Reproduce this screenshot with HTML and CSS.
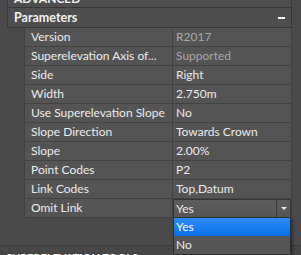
FILE: index.html
```html
<!DOCTYPE html>
<html lang="en">
<head>
    <meta charset="UTF-8">
    <title>Parameters</title>
    <link rel="stylesheet" href="styles.css">
</head>
<body>
    <div class="panel">
        <div class="section-head advanced">
            <span class="title">ADVANCED</span>
            <span class="toggle"></span>
        </div>
        <div class="section-head">
            <span class="title">Parameters</span>
            <span class="toggle"></span>
        </div>
        <div class="grid">
            <div class="row"><div class="name">Version</div><div class="value muted">R2017</div></div>
            <div class="row"><div class="name">Superelevation Axis of...</div><div class="value muted">Supported</div></div>
            <div class="row"><div class="name">Side</div><div class="value">Right</div></div>
            <div class="row"><div class="name">Width</div><div class="value">2.750m</div></div>
            <div class="row"><div class="name">Use Superelevation Slope</div><div class="value">No</div></div>
            <div class="row"><div class="name">Slope Direction</div><div class="value">Towards Crown</div></div>
            <div class="row"><div class="name">Slope</div><div class="value">2.00%</div></div>
            <div class="row"><div class="name">Point Codes</div><div class="value">P2</div></div>
            <div class="row"><div class="name">Link Codes</div><div class="value">Top,Datum</div></div>
            <div class="row">
                <div class="name">Omit Link</div>
                <div class="value combo-cell">
                    <div class="combo">
                        <span class="combo-text">Yes</span>
                        <span class="combo-btn"><span class="arrow"></span></span>
                    </div>
                    <ul class="dropdown">
                        <li class="selected">Yes</li>
                        <li>No</li>
                    </ul>
                </div>
            </div>
        </div>
        <div class="next-head">SUPERELEVATION TOOLS</div>
    </div>
</body>
</html>
```

FILE: styles.css
```css
/* Dark property panel */
body {
    margin: 0;
    background: #4a4a4a;
    font-family: Lato, "Liberation Sans", sans-serif;
    font-size: 12px;
    color: #ececec;
    overflow: hidden;
}

.panel {
    width: 301px;
    height: 267px;
    margin-top: -12px;
    background: #4a4a4a;
    position: relative;
}

.section-head {
    display: flex;
    justify-content: space-between;
    align-items: center;
    margin: 0 9px 0 7px;
    height: 19px;
    padding: 0 6px;
    background: #4e4e4e;
    border: 1px solid #383838;
    border-top: 0;
    font-weight: bold;
    font-size: 12.5px;
    color: #f2f2f2;
}

.section-head.advanced {
    align-items: flex-end;
}

.section-head.advanced .title {
    line-height: 16px;
    font-size: 12px;
}

.section-head.advanced .toggle {
    align-self: flex-end;
    margin-bottom: 8px;
}

.toggle {
    width: 7px;
    height: 2px;
    background: #f4f4f4;
}

.grid {
    margin: 0 9px 0 24px;
    background: #545454;
    border-left: 1px solid #404040;
    border-right: 1px solid #404040;
}

.row {
    display: flex;
    height: 18px;
    border-bottom: 1px solid #424242;
}

.name {
    width: 141px;
    padding-left: 6px;
    border-right: 1px solid #424242;
    line-height: 18px;
    white-space: nowrap;
    overflow: hidden;
}

.value {
    flex: 1;
    padding-left: 3px;
    line-height: 18px;
    white-space: nowrap;
}

.muted {
    color: #a8a8a8;
}

.combo-cell {
    position: relative;
    padding: 0;
}

.combo {
    display: flex;
    height: 17px;
    background: linear-gradient(#5c5c5c, #555555);
    border: 1px solid #363636;
}

.combo-text {
    flex: 1;
    padding-left: 2px;
    line-height: 17px;
}

.combo-btn {
    width: 13px;
    border-left: 1px solid #3a3a3a;
    display: flex;
    align-items: center;
    justify-content: center;
}

.arrow {
    width: 0;
    height: 0;
    border-left: 3px solid transparent;
    border-right: 3px solid transparent;
    border-top: 3px solid #e8e8e8;
}

.dropdown {
    position: absolute;
    top: 18px;
    left: 0;
    right: 0;
    margin: 0;
    padding: 0;
    list-style: none;
    background: #555555;
    border: 1px solid #2e2e2e;
    box-shadow: 2px 2px 2px rgba(0, 0, 0, 0.35);
    z-index: 10;
}

.dropdown li {
    height: 18px;
    line-height: 18px;
    padding-left: 2px;
}

.dropdown li.selected {
    background: linear-gradient(#2a8cff, #0a6fe6);
    color: #ffffff;
}

.next-head {
    position: absolute;
    left: 0;
    right: 0;
    top: 257px;
    height: 10px;
    border-top: 1px solid #3a3a3a;
    background: #474747;
    padding: 5px 0 0 6px;
    font-weight: bold;
    font-size: 11px;
    color: #ffffff;
    overflow: hidden;
}
```
